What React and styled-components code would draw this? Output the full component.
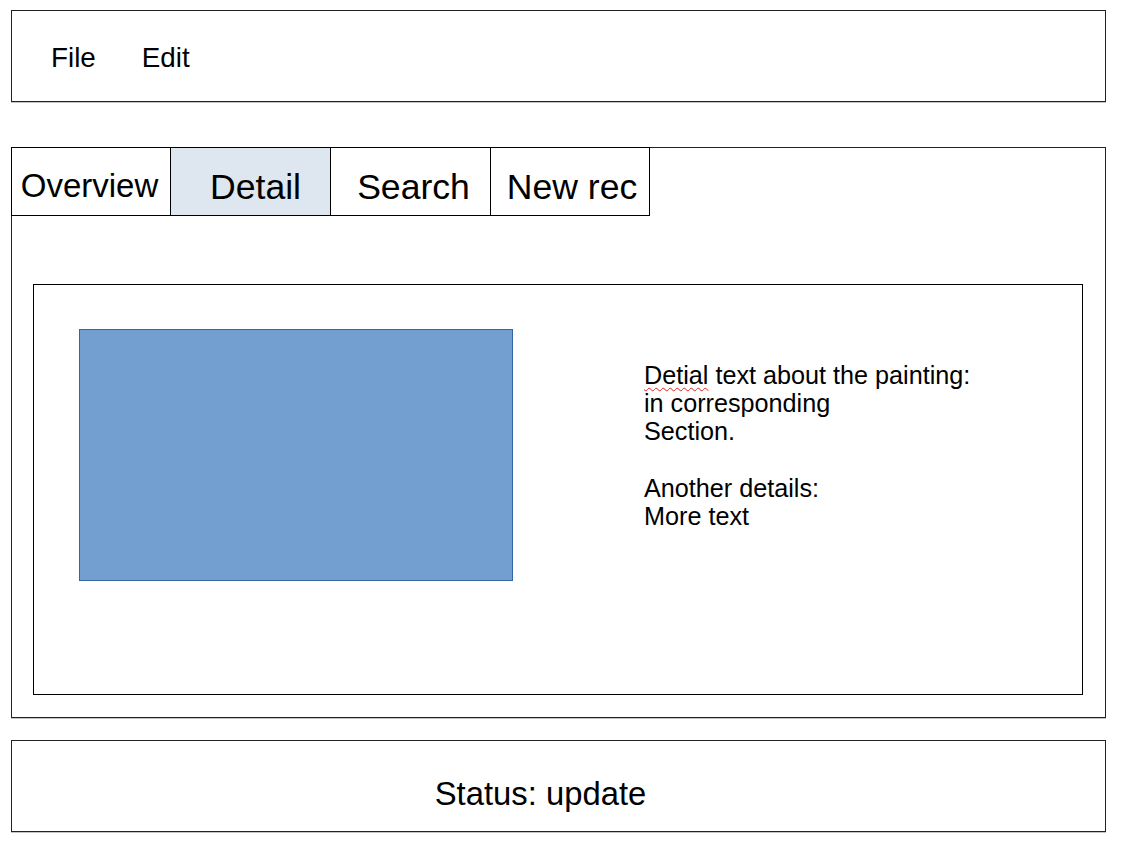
import React from 'react';
import styled, { createGlobalStyle } from 'styled-components';

const GlobalStyle = createGlobalStyle`
  html, body {
    margin: 0;
    padding: 0;
    background: #ffffff;
  }
  body {
    font-family: "Liberation Sans", Arial, sans-serif;
    color: #000;
  }
`;

const Page = styled.div`
  width: 1121px;
  height: 848px;
  box-sizing: border-box;
  padding: 10px 0 0 11px;
  display: flex;
  flex-direction: column;
`;

const Frame = styled.div`
  width: 1095px;
  box-sizing: border-box;
  border: 1px solid #222;
  box-shadow: 0 1px 0 #c4c4c4;
  background: #fff;
`;

const MenuBar = styled(Frame)`
  height: 92px;
  display: flex;
  align-items: flex-start;
  padding: 31px 0 0 39px;
  gap: 46px;
`;

const MenuItem = styled.span`
  font-size: 27.8px;
  line-height: normal;
`;

const MainPanel = styled(Frame)`
  margin-top: 45px;
  height: 571px;
  display: flex;
  flex-direction: column;
  padding: 0 22px 22px 21px;
`;

const TabRow = styled.div`
  display: flex;
  margin: -1px 0 0 -22px;
`;

const Tab = styled.div`
  width: ${(p) => p.$width}px;
  height: 69px;
  box-sizing: border-box;
  border: 1px solid #000;
  margin-left: ${(p) => (p.$first ? '0' : '-1px')};
  background: ${(p) => (p.$active ? '#dee6ef' : '#fff')};
  display: flex;
  justify-content: center;
  align-items: flex-start;
  padding-top: 19px;
  padding-left: ${(p) => Math.max(p.$nudge || 0, 0)}px;
  padding-right: ${(p) => Math.max(-(p.$nudge || 0), 0)}px;
  font-size: ${(p) => p.$size || 35.6}px;
  line-height: normal;
  white-space: nowrap;
`;

const ContentBox = styled.div`
  margin-top: 68px;
  flex: 1;
  box-sizing: border-box;
  border: 1px solid #000;
  display: flex;
  align-items: flex-start;
  padding: 44px 0 0 45px;
`;

const Painting = styled.div`
  width: 434px;
  height: 252px;
  box-sizing: border-box;
  background: #729fcf;
  border: 1px solid #3465a4;
  flex-shrink: 0;
`;

const DetailText = styled.div`
  margin: 32px 0 0 131px;
  font-size: 25.2px;
  line-height: 28.2px;
`;

const Line = styled.div`
  min-height: 28.2px;
`;

const Misspelled = styled.span`
  text-decoration: underline wavy #e0201c;
  text-decoration-thickness: 1px;
  text-underline-offset: 3px;
`;

const StatusBar = styled(Frame)`
  margin-top: 22px;
  height: 92px;
  display: flex;
  justify-content: center;
  align-items: flex-start;
  padding: 34px 36px 0 0;
`;

const StatusText = styled.span`
  font-size: 32.8px;
  line-height: normal;
`;

const tabs = [
  { label: 'Overview', size: 33, width: 160, nudge: -3 },
  { label: 'Detail', active: true, nudge: 10, width: 161 },
  { label: 'Search', nudge: 6, width: 161 },
  { label: 'New rec', nudge: 4, width: 160 },
];

export default function App() {
  return (
    <>
      <GlobalStyle />
      <Page>
        <MenuBar>
          <MenuItem>File</MenuItem>
          <MenuItem>Edit</MenuItem>
        </MenuBar>

        <MainPanel>
          <TabRow>
            {tabs.map((t, i) => (
              <Tab
                key={t.label}
                $first={i === 0}
                $active={t.active}
                $nudge={t.nudge}
                $size={t.size}
                $width={t.width}
              >
                {t.label}
              </Tab>
            ))}
          </TabRow>

          <ContentBox>
            <Painting />
            <DetailText>
              <Line>
                <Misspelled>Detial</Misspelled> text about the painting:
              </Line>
              <Line>in corresponding</Line>
              <Line>Section.</Line>
              <Line />
              <Line>Another details:</Line>
              <Line>More text</Line>
            </DetailText>
          </ContentBox>
        </MainPanel>

        <StatusBar>
          <StatusText>Status: update</StatusText>
        </StatusBar>
      </Page>
    </>
  );
}
